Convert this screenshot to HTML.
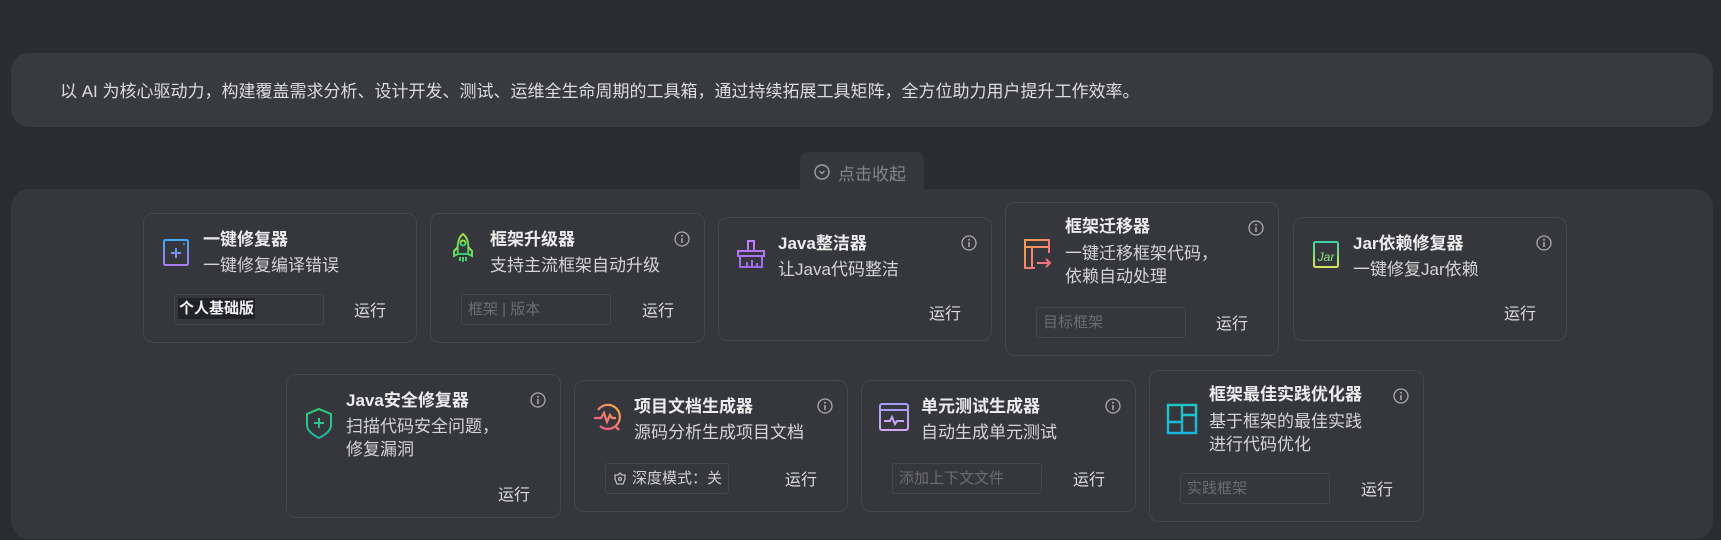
<!DOCTYPE html>
<html><head><meta charset="utf-8"><style>
*{margin:0;padding:0;box-sizing:border-box}
body{width:1721px;height:540px;background:#2b2c30;font-family:"Liberation Sans","Noto Sans CJK SC",sans-serif;position:relative;overflow:hidden;color:#ddd}
.banner{position:absolute;left:11px;top:53px;width:1702px;height:74px;background:#393a3f;border-radius:18px}
.banner p{position:absolute;left:49px;top:24px;font-size:17px;color:#dcdcdc}
.collapse{position:absolute;left:800px;top:152px;width:124px;height:40px;background:#36373c;border-radius:8px 8px 0 0;color:#85868b;font-size:17px;padding:8px 0 0 38px}
.collapse svg{position:absolute;left:14px;top:12px}
.panel{position:absolute;left:11px;top:189px;width:1702px;height:350px;background:#36373c;border-radius:18px}
.card{position:absolute;border:1px solid #46474c;border-radius:10px;background:#36373c}
.ic{position:absolute;left:16px;width:32px;height:32px}
.t{position:absolute;left:59px;top:14px;font-size:17px;font-weight:bold;color:#ececec;line-height:24px;white-space:nowrap}
.d{position:absolute;left:59px;top:40px;font-size:17px;color:#d4d4d4;line-height:24px;white-space:nowrap}
.info{position:absolute;right:14px;top:17px}
.inp{position:absolute;left:30px;bottom:17px;width:150px;height:31px;border:1px solid #46474c;border-radius:3px;font-size:15px;color:#6c6d72;padding:5px 6px;line-height:19px;white-space:nowrap}
.run{position:absolute;right:30px;bottom:21px;font-size:16px;color:#dcdcdc}
</style></head><body>
<div class="banner"><p>以 AI 为核心驱动力，构建覆盖需求分析、设计开发、测试、运维全生命周期的工具箱，通过持续拓展工具矩阵，全方位助力用户提升工作效率。</p></div>
<div class="panel"></div>
<div class="collapse"><svg width="16" height="16" viewBox="0 0 16 16"><circle cx="8" cy="8" r="7" fill="none" stroke="#a0a1a6" stroke-width="1.4"/><path d="M5.5 7l2.5 2.5L10.5 7" fill="none" stroke="#a0a1a6" stroke-width="1.4"/></svg>点击收起</div>

<svg width="0" height="0" style="position:absolute"><defs>
<linearGradient id="g1" x1="0" y1="0" x2="0" y2="1"><stop offset="0" stop-color="#3fa9f5"/><stop offset="1" stop-color="#a77cf2"/></linearGradient>
<linearGradient id="g2" x1="0" y1="0" x2="0" y2="1"><stop offset="0" stop-color="#a5e04a"/><stop offset="1" stop-color="#2ecc71"/></linearGradient>
<linearGradient id="g3" x1="0" y1="0" x2="0" y2="1"><stop offset="0" stop-color="#c77dff"/><stop offset="1" stop-color="#9b6cf0"/></linearGradient>
<linearGradient id="g4" x1="0" y1="0" x2="1" y2="1"><stop offset="0" stop-color="#f6a04d"/><stop offset="1" stop-color="#f06a8a"/></linearGradient>
<linearGradient id="g5" x1="0" y1="0" x2="0" y2="1"><stop offset="0" stop-color="#3ed6a0"/><stop offset="1" stop-color="#d8e25a"/></linearGradient>
<linearGradient id="g6" x1="0" y1="0" x2="0" y2="1"><stop offset="0" stop-color="#2ed47a"/><stop offset="1" stop-color="#1fb5a8"/></linearGradient>
<linearGradient id="g7" x1="1" y1="0" x2="0" y2="1"><stop offset="0" stop-color="#f7b046"/><stop offset="1" stop-color="#f0489a"/></linearGradient>
<linearGradient id="g8" x1="0" y1="0" x2="0" y2="1"><stop offset="0" stop-color="#a79cf5"/><stop offset="1" stop-color="#d0a8f0"/></linearGradient>
<linearGradient id="g9" x1="0" y1="0" x2="0" y2="1"><stop offset="0" stop-color="#1ec8c8"/><stop offset="1" stop-color="#18b4e0"/></linearGradient>
</defs></svg>

<div class="card" style="left:143px;top:213px;width:274px;height:130px">
<svg class="ic" style="top:20px" viewBox="0 0 32 32"><path d="M13 2h6" stroke="url(#g1)" stroke-width="2"/><rect x="4" y="6" width="24" height="25" rx="1.5" fill="none" stroke="url(#g1)" stroke-width="2"/><path d="M16 14v10M11 19h10" stroke="url(#g1)" stroke-width="2"/><circle cx="24" cy="10" r="1" fill="#3fa9f5"/></svg>
<div class="t">一键修复器</div><div class="d">一键修复编译错误</div>
<div class="inp" style="padding:4px 3px"><span style="background:#222327;color:#f0f0f0;font-weight:bold;padding:2px 1px">个人基础版</span></div>
<div class="run">运行</div></div>

<div class="card" style="left:430px;top:213px;width:275px;height:130px">
<svg class="ic" style="top:18px" viewBox="0 0 32 32" fill="none" stroke="url(#g2)" stroke-width="2"><path d="M16 2c5 4 6 10 5 20h-10C10 12 11 6 16 2z"/><circle cx="16" cy="11" r="2.5"/><path d="M11 15l-4 4v5l4-2M21 15l4 4v5l-4-2M13 25v4M16 25v5M19 25v4"/></svg>
<svg class="info" width="16" height="16" viewBox="0 0 16 16"><circle cx="8" cy="8" r="7" fill="none" stroke="#aaa" stroke-width="1.3"/><path d="M8 7v5" stroke="#aaa" stroke-width="1.5"/><circle cx="8" cy="4.8" r="1" fill="#aaa"/></svg>
<div class="t">框架升级器</div><div class="d">支持主流框架自动升级</div>
<div class="inp">框架 | 版本</div><div class="run">运行</div></div>

<div class="card" style="left:718px;top:217px;width:274px;height:124px">
<svg class="ic" style="top:20px" viewBox="0 0 32 32" fill="none" stroke="url(#g3)" stroke-width="2"><path d="M13 3h6v10h-6zM3 13h26v5H3zM5 18h22v11H5zM12 29v-5M17 29v-7M22 29v-4"/></svg>
<svg class="info" width="16" height="16" viewBox="0 0 16 16"><circle cx="8" cy="8" r="7" fill="none" stroke="#aaa" stroke-width="1.3"/><path d="M8 7v5" stroke="#aaa" stroke-width="1.5"/><circle cx="8" cy="4.8" r="1" fill="#aaa"/></svg>
<div class="t">Java整洁器</div><div class="d">让Java代码整洁</div>
<div class="run" style="bottom:16px">运行</div></div>

<div class="card" style="left:1005px;top:202px;width:274px;height:154px">
<svg class="ic" style="top:34px" viewBox="0 0 32 32" fill="none" stroke="url(#g4)" stroke-width="2"><path d="M27 16V3H3v28h10M3 10h24M10 10v21M15 26h13M24 22l4 4-4 4"/></svg>
<svg class="info" width="16" height="16" viewBox="0 0 16 16"><circle cx="8" cy="8" r="7" fill="none" stroke="#aaa" stroke-width="1.3"/><path d="M8 7v5" stroke="#aaa" stroke-width="1.5"/><circle cx="8" cy="4.8" r="1" fill="#aaa"/></svg>
<div class="t" style="top:12px">框架迁移器</div><div class="d" style="top:39px;line-height:23px">一键迁移框架代码，<br>依赖自动处理</div>
<div class="inp">目标框架</div><div class="run">运行</div></div>

<div class="card" style="left:1293px;top:217px;width:274px;height:124px">
<svg class="ic" style="top:18px" viewBox="0 0 32 32"><path d="M13 2h6" stroke="url(#g5)" stroke-width="2"/><rect x="4" y="6" width="24" height="25" rx="1.5" fill="none" stroke="url(#g5)" stroke-width="2"/><text x="16" y="25" font-size="12" font-style="italic" text-anchor="middle" fill="#8ee08a" font-family="Liberation Sans">Jar</text></svg>
<svg class="info" width="16" height="16" viewBox="0 0 16 16"><circle cx="8" cy="8" r="7" fill="none" stroke="#aaa" stroke-width="1.3"/><path d="M8 7v5" stroke="#aaa" stroke-width="1.5"/><circle cx="8" cy="4.8" r="1" fill="#aaa"/></svg>
<div class="t">Jar依赖修复器</div><div class="d">一键修复Jar依赖</div>
<div class="run" style="bottom:16px">运行</div></div>

<div class="card" style="left:286px;top:374px;width:275px;height:144px">
<svg class="ic" style="top:32px" viewBox="0 0 32 32" fill="none" stroke="url(#g6)" stroke-width="2"><path d="M16 2l12 5v11c0 6-6 10-12 13C10 28 4 24 4 18V7z"/><path d="M16 11v10M11 16h10"/></svg>
<svg class="info" width="16" height="16" viewBox="0 0 16 16"><circle cx="8" cy="8" r="7" fill="none" stroke="#aaa" stroke-width="1.3"/><path d="M8 7v5" stroke="#aaa" stroke-width="1.5"/><circle cx="8" cy="4.8" r="1" fill="#aaa"/></svg>
<div class="t">Java安全修复器</div><div class="d" style="line-height:23px">扫描代码安全问题，<br>修复漏洞</div>
<div class="run" style="bottom:12px">运行</div></div>

<div class="card" style="left:574px;top:380px;width:274px;height:132px">
<svg class="ic" style="top:20px" viewBox="0 0 32 32" fill="none" stroke="url(#g7)" stroke-width="2.2"><path d="M7 9A12 12 0 1 1 9 25M24 25l4 4M3 17h7l3-5 3 9 3-7 2 3h4"/></svg>
<svg class="info" width="16" height="16" viewBox="0 0 16 16"><circle cx="8" cy="8" r="7" fill="none" stroke="#aaa" stroke-width="1.3"/><path d="M8 7v5" stroke="#aaa" stroke-width="1.5"/><circle cx="8" cy="4.8" r="1" fill="#aaa"/></svg>
<div class="t">项目文档生成器</div><div class="d">源码分析生成项目文档</div>
<div class="inp" style="width:124px;color:#cfcfcf;padding-left:26px">
<svg style="position:absolute;left:7px;top:8px" width="14" height="14" viewBox="0 0 14 14" fill="none" stroke="#bbb" stroke-width="1.3"><path d="M7 1l2 2h3v4l-2 5H4L2 7V3h3z"/><circle cx="7" cy="7" r="1.5"/></svg>深度模式：关</div>
<div class="run">运行</div></div>

<div class="card" style="left:861px;top:380px;width:275px;height:132px">
<svg class="ic" style="top:20px" viewBox="0 0 32 32" fill="none" stroke="url(#g8)" stroke-width="2"><rect x="2" y="3" width="28" height="26" rx="2"/><path d="M2 9h28M6 20h6l2-4 3 7 2-3h7"/></svg>
<svg class="info" width="16" height="16" viewBox="0 0 16 16"><circle cx="8" cy="8" r="7" fill="none" stroke="#aaa" stroke-width="1.3"/><path d="M8 7v5" stroke="#aaa" stroke-width="1.5"/><circle cx="8" cy="4.8" r="1" fill="#aaa"/></svg>
<div class="t">单元测试生成器</div><div class="d">自动生成单元测试</div>
<div class="inp">添加上下文文件</div><div class="run">运行</div></div>

<div class="card" style="left:1149px;top:370px;width:275px;height:152px">
<svg class="ic" style="top:32px" viewBox="0 0 32 32" fill="none" stroke="url(#g9)" stroke-width="2.4"><rect x="2" y="2" width="28" height="28"/><path d="M16 2v28M2 19h14M16 12h14"/></svg>
<svg class="info" width="16" height="16" viewBox="0 0 16 16"><circle cx="8" cy="8" r="7" fill="none" stroke="#aaa" stroke-width="1.3"/><path d="M8 7v5" stroke="#aaa" stroke-width="1.5"/><circle cx="8" cy="4.8" r="1" fill="#aaa"/></svg>
<div class="t" style="top:12px">框架最佳实践优化器</div><div class="d" style="top:39px;line-height:23px">基于框架的最佳实践<br>进行代码优化</div>
<div class="inp">实践框架</div><div class="run">运行</div></div>
</body></html>
